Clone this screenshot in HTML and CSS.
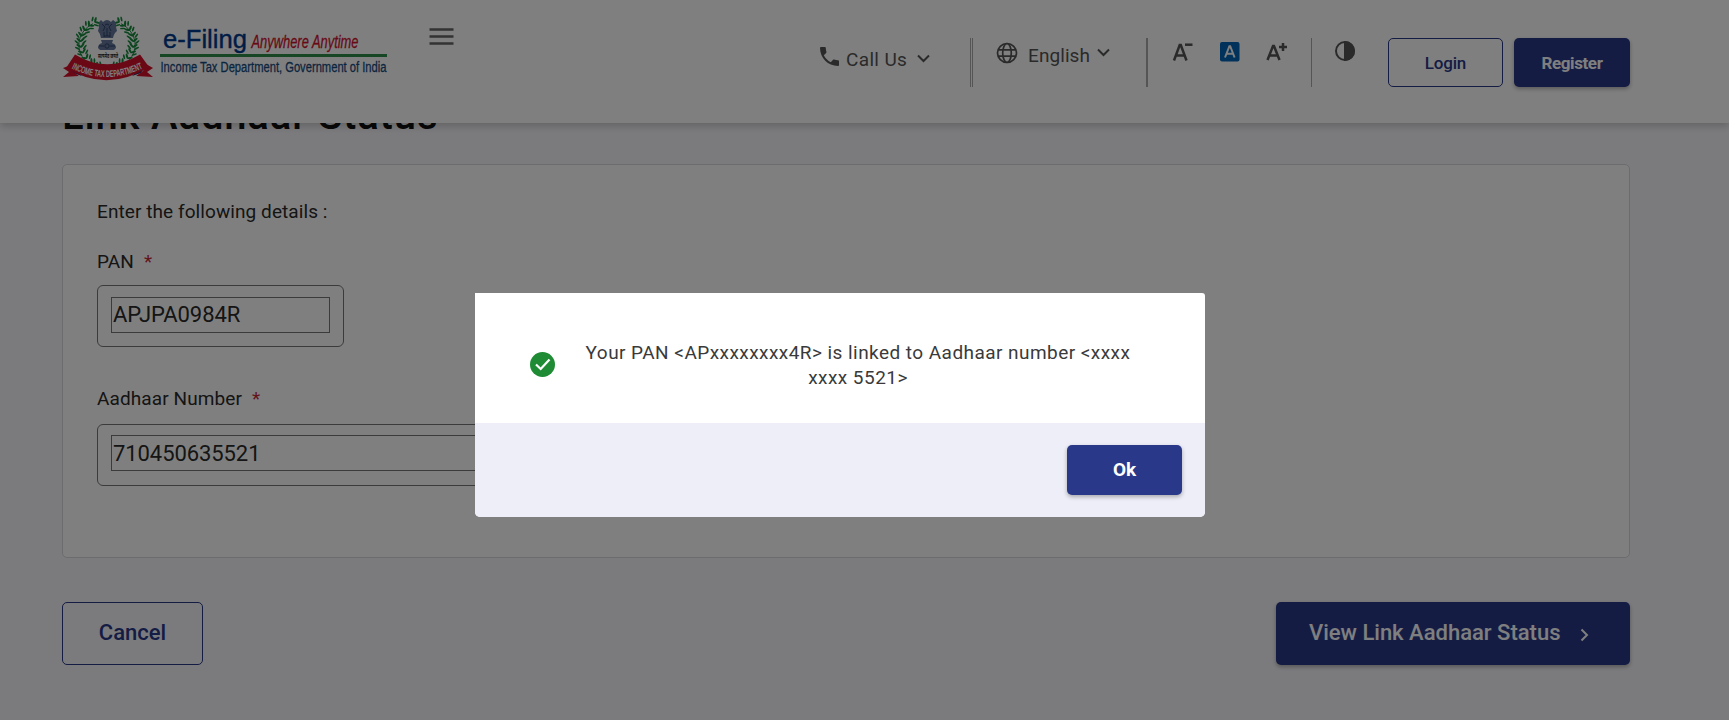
FILE: index.html
```html
<!DOCTYPE html>
<html lang="en">
<head>
<meta charset="utf-8">
<title>Link Aadhaar Status</title>
<link rel="stylesheet" href="styles.css">
</head>
<body>
<header class="header">
  <svg class="logo" width="340" height="76" viewBox="60 12 340 76">
    <defs>
      <path id="ribbon-curve" d="M71.500 68.500Q107 86 144.500 67.500"/>
      <g id="sprig"><ellipse cx="-2.400" cy="0" rx="3" ry="1.100" transform="rotate(42)"/><ellipse cx="2.400" cy="0" rx="3" ry="1.100" transform="rotate(-42)"/><ellipse cx="-2.400" cy="3" rx="2.800" ry=".9" transform="rotate(42)"/><ellipse cx="2.400" cy="3" rx="2.800" ry=".9" transform="rotate(-42)"/></g>
    </defs>
    <g class="wreath" transform="translate(0 5) scale(1 .935)">
      <path class="wreath-stem" d="M93 20C76 29 74 51 89 63Q98 71 108 72"/>
      <path class="wreath-stem" d="M121 20C138 29 140 51 125 63Q116 71 106 72"/>
      <use href="#sprig" transform="translate(95 18) rotate(60)"/>
      <use href="#sprig" transform="translate(89 22) rotate(45)"/>
      <use href="#sprig" transform="translate(84.500 27) rotate(28)"/>
      <use href="#sprig" transform="translate(81.500 33) rotate(12)"/>
      <use href="#sprig" transform="translate(80.500 39)"/>
      <use href="#sprig" transform="translate(81 45) rotate(-10)"/>
      <use href="#sprig" transform="translate(83 51) rotate(-22)"/>
      <use href="#sprig" transform="translate(86.500 57) rotate(-35)"/>
      <use href="#sprig" transform="translate(91.500 62) rotate(-50)"/>
      <use href="#sprig" transform="translate(98 66) rotate(-60)"/>
      <use href="#sprig" transform="translate(119 18) rotate(-60)"/>
      <use href="#sprig" transform="translate(125 22) rotate(-45)"/>
      <use href="#sprig" transform="translate(129.500 27) rotate(-28)"/>
      <use href="#sprig" transform="translate(132.500 33) rotate(-12)"/>
      <use href="#sprig" transform="translate(133.500 39)"/>
      <use href="#sprig" transform="translate(133 45) rotate(10)"/>
      <use href="#sprig" transform="translate(131 51) rotate(22)"/>
      <use href="#sprig" transform="translate(127.500 57) rotate(35)"/>
      <use href="#sprig" transform="translate(122.500 62) rotate(50)"/>
      <use href="#sprig" transform="translate(116 66) rotate(60)"/>
    </g>
    <g class="lions">
      <path d="M103 22Q107 18 111 22L113 20Q117 22 116 27L117 31Q114 33 113 38H101Q100 33 98 31L99 27Q98 22 101 20Z"/>
      <path d="M101 40H113L112 43Q116 44 116 48L114 50H100L98 48Q98 44 102 43Z"/>
      <path class="lion-detail" d="M102 24L105 27L103 31M112 24L109 27L111 31M105 25Q107 23 109 25M107 28V36M104 32V37M110 32V37M99 46H104M110 46H115M104 36H110"/>
      <circle class="lion-detail" cx="107" cy="46" r="2.200"/>
    </g>
    <text class="motto" x="98" y="58" textLength="20" lengthAdjust="spacingAndGlyphs">सत्यमेव जयते</text>
    <path class="ribbon-fold" d="M68 65L77 71L82 76L73 73ZM146 65L137 71L132 76L141 73Z"/>
    <path class="ribbon" d="M63 77L69 72L63 68L71 65L72 71L79 76ZM153 77L147 72L153 68L146 64L143 71L136 76Z"/>
    <path class="ribbon" d="M75 54.500Q107 74 140 54.500L149 67Q107 93 66 68Z"/>
    <text class="ribbon-text"><textPath href="#ribbon-curve" textLength="74" lengthAdjust="spacingAndGlyphs">INCOME TAX DEPARTMENT</textPath></text>
    <text class="brand" x="163" y="47.700" textLength="84" lengthAdjust="spacingAndGlyphs">e-Filing</text>
    <text class="tagline" x="251.500" y="48" textLength="107" lengthAdjust="spacingAndGlyphs">Anywhere Anytime</text>
    <rect class="brand-rule" x="160" y="54" width="227" height="3"/>
    <text class="dept" x="160.500" y="71.500" textLength="226" lengthAdjust="spacingAndGlyphs">Income Tax Department, Government of India</text>
  </svg>
  <svg class="menu" width="26" height="20" viewBox="0 0 26 20"><path d="M.5 3.500H24.500M.5 10.500H24.500M.5 17.500H24.500"/></svg>
  <nav class="tools">
    <div class="tool call">
      <svg class="phone" width="19" height="19" viewBox="3 3 18 18"><path d="M6.620 10.790c1.440 2.830 3.760 5.140 6.590 6.590l2.200-2.200c.27-.27.67-.36 1.020-.24 1.120.37 2.330.57 3.570.57.55 0 1 .45 1 1V20c0 .55-.45 1-1 1-9.390 0-17-7.610-17-17 0-.55.45-1 1-1h3.500c.55 0 1 .45 1 1 0 1.250.2 2.450.57 3.570.11.35.03.74-.25 1.020l-2.200 2.200z"/></svg>
      <span class="call-label">Call Us</span>
      <svg class="chevron" width="13" height="9" viewBox="0 0 13 9"><path d="M1 1.500L6.500 7L12 1.500"/></svg>
    </div>
    <span class="divider divider-double"></span>
    <div class="tool lang">
      <svg class="globe" width="22" height="22" viewBox="0 0 22 22"><circle cx="11" cy="11" r="9.500"/><ellipse cx="11" cy="11" rx="4.300" ry="9.500"/><path d="M2 7.800H20M2 14.200H20"/></svg>
      <span class="lang-label">English</span>
      <svg class="chevron" width="13" height="9" viewBox="0 0 13 9"><path d="M1 1.500L6.500 7L12 1.500"/></svg>
    </div>
    <span class="divider"></span>
    <div class="sizes">
      <svg width="22" height="20" viewBox="0 0 22 20"><path class="letter" d="M2 18.500L7.700 3H8.800L14.500 18.500M4 13.500H12.500"/><path class="sign" d="M13 2.700H20.500"/></svg>
      <svg width="20" height="20" viewBox="0 0 20 20"><rect class="size-box" width="19.500" height="19.500" rx="2"/><path class="letter-on" d="M5 15.500L9.400 4.200H10.200L14.600 15.500M6.500 11.800H13.200"/></svg>
      <svg width="22" height="20" viewBox="0 0 22 20"><path class="letter" d="M1.500 18L7 4H8L13.500 18M3.500 13.500H11.500"/><path class="sign" d="M13 5H21M17 1V9"/></svg>
    </div>
    <span class="divider"></span>
    <svg class="contrast" width="22" height="22" viewBox="0 0 22 22"><circle cx="11" cy="11" r="9"/><path d="M11 2A9 9 0 0 1 11 20Z"/></svg>
    <button class="btn btn-outline login">Login</button>
    <button class="btn btn-solid register">Register</button>
  </nav>
</header>
<main class="main">
  <h1 class="title">Link Aadhaar Status</h1>
  <section class="card">
    <p class="intro">Enter the following details :</p>
    <label class="label">PAN<span class="req">*</span></label>
    <div class="field field-pan"><div class="field-inner">APJPA0984R</div></div>
    <label class="label label-aadhaar">Aadhaar Number<span class="req">*</span></label>
    <div class="field field-aadhaar"><div class="field-inner">710450635521</div></div>
  </section>
  <div class="actions">
    <button class="btn btn-outline cancel">Cancel</button>
    <button class="btn btn-solid view"><span>View Link Aadhaar Status</span><svg width="10" height="14" viewBox="0 0 10 14"><path d="M1.500 1.500L7 7L1.500 12.500"/></svg></button>
  </div>
</main>
<div class="overlay">
  <div class="modal" role="dialog">
    <div class="modal-body">
      <svg class="check" width="25" height="25" viewBox="0 0 25 25"><circle cx="12.500" cy="12.500" r="12.500"/><path d="M6 12.500L10.700 17L19.500 7.500"/></svg>
      <p class="message">Your PAN &lt;APxxxxxxxx4R&gt; is linked to Aadhaar number &lt;xxxx<br>xxxx 5521&gt;</p>
    </div>
    <div class="modal-foot"><button class="btn btn-solid ok">Ok</button></div>
  </div>
</div>
</body>
</html>
```
FILE: styles.css
```css
* { box-sizing: border-box; }
body {
  margin: 0;
  height: 720px;
  overflow: hidden;
  background: #f7f7fb;
  color: #2a2a2a;
  font-family: Roboto, sans-serif;
}
svg { display: block; flex: none; }
.header {
  position: relative;
  z-index: 1;
  display: flex;
  align-items: flex-start;
  height: 123px;
  padding: 12px 99px 0 60px;
  background: #fff;
  box-shadow: 0 3px 8px rgba(0, 0, 0, .2);
}
.logo { overflow: visible; }
.wreath { fill: #148a3c; }
.wreath-stem { fill: none; stroke: #148a3c; stroke-width: 1; }
.lions { fill: #64789c; }
.lion-detail { fill: none; stroke: #27385f; stroke-width: .8; }
.motto { font: 700 6px "Noto Sans", sans-serif; fill: #222; }
.ribbon { fill: #d6102c; }
.ribbon-fold { fill: #20336d; }
.ribbon-text { font: 700 9.500px "Liberation Sans", sans-serif; fill: #fff; }
.brand { font: 26.500px "Liberation Sans", sans-serif; fill: #003a8c; stroke: #003a8c; stroke-width: .4; }
.tagline { font: italic 18px "Liberation Sans", sans-serif; fill: #d0122d; stroke: #d0122d; stroke-width: .3; }
.brand-rule { fill: #2c8c46; }
.dept { font: 15.500px "Liberation Sans", sans-serif; fill: #174a7c; stroke: #174a7c; stroke-width: .3; }
.menu { margin: 14px 0 0 29px; fill: none; stroke: #666; stroke-width: 2.300; }
.tools { display: flex; margin-left: auto; padding-top: 26px; align-items: flex-start; color: #555; }
.tool { display: flex; align-items: flex-start; font-size: 19px; line-height: 24px; letter-spacing: .35px; }
.phone { margin-top: 9px; fill: #555; }
.call-label { width: 63px; margin: 10px 8px 0 7px; white-space: nowrap; }
.call .chevron { margin-top: 16px; }
.chevron { fill: none; stroke: #555; stroke-width: 2; }
.divider { width: 1.500px; height: 49px; background: #aaa; }
.divider-double { width: 3px; margin: 0 23px 0 40px; background: none; border: solid #aaa; border-width: 0 1px; }
.globe { margin-top: 4px; fill: none; stroke: #555; stroke-width: 1.700; }
.lang-label { width: 63px; margin: 6px 6px 0 10px; letter-spacing: .08px; white-space: nowrap; }
.lang .chevron { margin: 10px 36px 0 0; }
.sizes { display: flex; gap: 26px; margin: 4px 23px 0 24px; }
.letter { fill: none; stroke: #555; stroke-width: 2.500; }
.sign { fill: none; stroke: #555; stroke-width: 2.500; }
.size-box { fill: #0065b8; }
.letter-on { fill: none; stroke: #fff; stroke-width: 2; }
.contrast { margin: 2px 32px 0 22px; fill: none; stroke: #555; stroke-width: 2; }
.contrast path { fill: #555; }
.btn {
  padding: 0;
  border: 0;
  border-radius: 5px;
  font-family: Roboto, sans-serif;
  font-weight: 500;
}
.btn-outline { border: 1px solid #293889; background: transparent; color: #293889; }
.btn-solid { background: #293889; color: #fff; box-shadow: 0 2px 4px rgba(0, 0, 0, .3); }
.login { width: 115px; height: 49px; font-size: 17px; letter-spacing: -.2px; }
.register { width: 116px; height: 49px; margin-left: 11px; font-size: 17px; font-weight: 700; letter-spacing: -.4px; }
.main { padding: 0 99px 0 62px; }
.title { margin: -31px 0 24px 0; font-size: 40px; line-height: 48px; font-weight: 500; letter-spacing: .85px; color: #111; }
.card {
  display: flex;
  flex-direction: column;
  align-items: flex-start;
  height: 394px;
  padding: 34px;
  border: 1px solid #d9d9de;
  border-radius: 5px;
  background: #fff;
}
.intro { margin: 0; font-size: 19px; line-height: 26px; letter-spacing: .08px; }
.label { margin-top: 24px; font-size: 19px; line-height: 26px; letter-spacing: .1px; }
.req { margin-left: 10px; color: #c62839; }
.field {
  height: 62px;
  margin-top: 10px;
  padding: 11px 13px;
  border: 1px solid #777;
  border-radius: 6px;
}
.field-pan { width: 247px; }
.field-aadhaar { width: 600px; margin-top: 12px; padding-top: 10px; }
.field-inner { height: 36px; padding-left: 1px; border: 1px solid #777; font-size: 22px; line-height: 34px; letter-spacing: -.08px; }
.field-aadhaar .field-inner { line-height: 36px; }
.label-aadhaar { margin-top: 39px; }
.actions { display: flex; justify-content: space-between; margin-top: 44px; }
.cancel { width: 141px; height: 63px; padding-bottom: 2px; font-size: 22px; }
.view { display: flex; align-items: center; width: 354px; height: 63px; padding: 0 0 2px 33px; font-size: 22px; }
.view svg { margin: 4px 0 0 19px; fill: none; stroke: #fff; stroke-width: 2; }
.overlay { position: fixed; inset: 0; z-index: 2; background: rgba(0, 0, 0, .5); }
.modal {
  width: 730px;
  margin: 293px 0 0 475px;
  border-radius: 0 3px 5px 5px;
  overflow: hidden;
  background: #fff;
}
.modal-body { display: flex; height: 130px; padding-left: 55px; }
.check { margin-top: 59px; fill: #1f8b34; }
.check path { fill: none; stroke: #fff; stroke-width: 2.200; }
.message {
  width: 548px;
  margin: 47px 0 0 29px;
  color: #3a3a3a;
  font-size: 19px;
  line-height: 25px;
  letter-spacing: .45px;
  text-align: center;
  white-space: nowrap;
}
.modal-foot { display: flex; justify-content: flex-end; height: 94px; padding: 22px 23px; background: #eeeef8; }
.ok { width: 115px; height: 50px; padding-bottom: 2px; font-size: 19px; font-weight: 700; }
```
